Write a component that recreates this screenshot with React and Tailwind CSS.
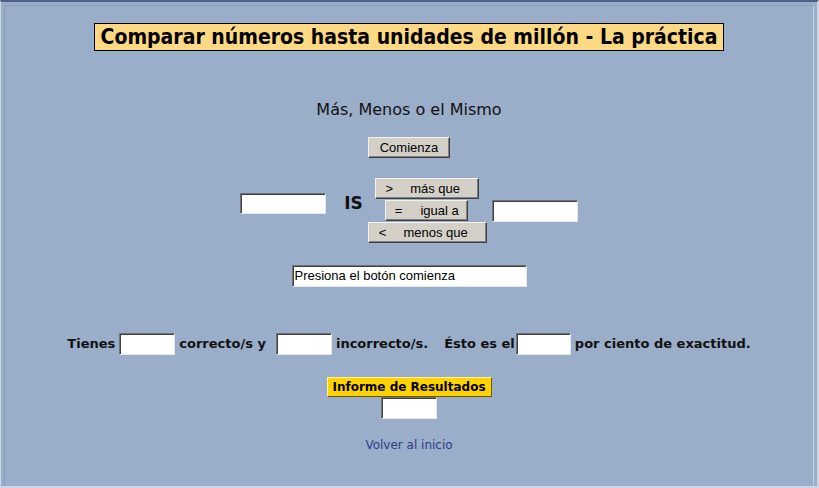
import React from "react";

const inputCls =
  "bg-white border border-t-[#6f737a] border-l-[#6f737a] border-b-[#e4e8ee] border-r-[#e4e8ee] shadow-[inset_1px_1px_0_#404040]";

const btnCls =
  "bg-[#d4d0c8] border border-t-[#f4f2ee] border-l-[#f4f2ee] border-b-[#404040] border-r-[#404040] shadow-[inset_-1px_-1px_0_#808080] text-[13px] text-black flex items-center justify-center whitespace-pre";

function SymBtn({ sym, label, w, gap, pr }) {
  return (
    <div className={`${btnCls} ${w} h-[21px]`}>
      <div className={`flex items-center ${pr}`}>
        <span>{sym}</span>
        <span className={gap}>{label}</span>
      </div>
    </div>
  );
}

export default function App() {
  return (
    <div
      className="w-[819px] h-[488px] bg-[#9aadc9] border-t-2 border-t-[#4f6084] border-l border-l-[#c9d4e5] border-r-2 border-r-[#c9d4e5] border-b-2 border-b-[#c9d4e5] overflow-hidden"
      style={{ fontFamily: '"DejaVu Sans", Verdana, sans-serif' }}
    >
      <div className="h-full m-[3px] border border-t-[#8a9cb9] border-l-[#8a9cb9] border-r-[#c3cfe1] border-b-[#c3cfe1] flex flex-col items-center">
        {/* Title */}
        <div
          className="mt-[17px] h-[28px] w-[630px] bg-[#fdd983] border border-black flex items-center justify-center text-black font-bold text-[21px] leading-none whitespace-nowrap"
          style={{ fontFamily: '"DejaVu Sans Condensed", "DejaVu Sans", sans-serif' }}
        >
          Comparar números hasta unidades de millón - La práctica
        </div>

        {/* Subtitle */}
        <div className="mt-[49px] h-[20px] leading-[20px] text-[16px] text-[#111]">
          Más, Menos o el Mismo
        </div>

        {/* Comienza */}
        <div
          className={`${btnCls} mt-[17px] w-[82px] h-[21px]`}
          style={{ fontFamily: '"Liberation Sans", Arial, sans-serif' }}
        >
          Comienza
        </div>

        {/* Comparison row */}
        <div className="mt-[20px] h-[65px] flex items-start">
          <div className={`${inputCls} mt-[15px] w-[86px] h-[21px]`} />
          <div className="ml-[18px] mt-[15px] h-[21px] leading-[21px] text-[17px] font-bold text-[#111]">
            IS
          </div>
          <div
            className="ml-[5px] flex flex-col items-center gap-[1px] w-[119px]"
            style={{ fontFamily: '"Liberation Sans", Arial, sans-serif' }}
          >
            <SymBtn sym=">" label="más que" w="w-[104px] ml-[-1px]" gap="ml-[17px]" pr="pr-[8px]" />
            <SymBtn sym="=" label="igual a" w="w-[83px] ml-[-1px]" gap="ml-[18px]" pr="pr-[0px]" />
            <SymBtn sym="<" label="menos que" w="w-[119px]" gap="ml-[17px]" pr="pr-[8px]" />
          </div>
          <div className={`${inputCls} ml-[5px] mt-[22px] w-[86px] h-[22px]`} />
        </div>

        {/* Message */}
        <div
          className={`${inputCls} mt-[22px] w-[235px] h-[22px] flex items-center pl-[2px] text-[13px] text-black`}
          style={{ fontFamily: '"Liberation Sans", Arial, sans-serif' }}
        >
          Presiona el botón comienza
        </div>

        {/* Results row */}
        <div className="mt-[46px] h-[22px] flex items-center text-[13px] font-bold text-[#111] whitespace-pre">
          <span>Tienes</span>
          <div className={`${inputCls} ml-[4px] w-[56px] h-[22px]`} />
          <span className="ml-[4px]">correcto/s y</span>
          <div className={`${inputCls} ml-[10px] w-[56px] h-[22px]`} />
          <span className="ml-[4px]">incorrecto/s.</span>
          <span className="ml-[16px]">Ésto es el</span>
          <div className={`${inputCls} ml-[1px] w-[55px] h-[22px]`} />
          <span className="ml-[4px]">por ciento de exactitud.</span>
        </div>

        {/* Informe */}
        <div className="mt-[22px] w-[165px] h-[20px] bg-[#ffd200] border border-t-[#fff3a0] border-l-[#fff3a0] border-b-[#6b5a00] border-r-[#6b5a00] flex items-center justify-center text-[12px] font-bold text-black whitespace-nowrap">
          Informe de Resultados
        </div>
        <div className={`${inputCls} w-[56px] h-[22px]`} />

        {/* Link */}
        <div className="mt-[18px] h-[16px] leading-[16px] text-[12px] text-[#2b3c8c]">
          Volver al inicio
        </div>
      </div>
    </div>
  );
}
